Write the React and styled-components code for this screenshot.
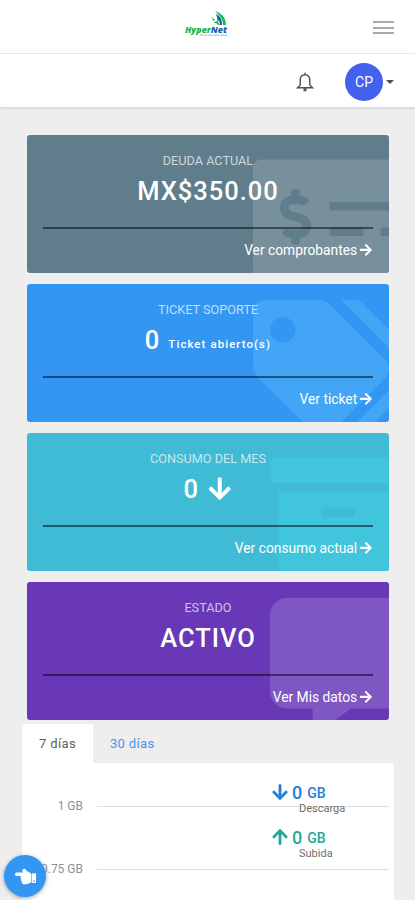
import React, { useState } from 'react'
import styled, { createGlobalStyle } from 'styled-components'
import {
  FaArchive,
  FaArrowDown,
  FaArrowRight,
  FaArrowUp,
  FaCommentAlt,
  FaHandPointLeft,
  FaMoneyCheckAlt,
  FaTags
} from 'react-icons/fa'

const GlobalStyle = createGlobalStyle`
  * {
    box-sizing: border-box;
  }
  body {
    margin: 0;
    background: #eeeeee;
    font-family: Roboto, 'Liberation Sans', sans-serif;
    font-size: 13px;
    color: #5e5e5e;
    overflow: hidden;
  }
`

const Page = styled.div`
  height: 900px;
  overflow: hidden;
`

const TopBar = styled.header`
  display: grid;
  grid-template-columns: 1fr auto 1fr;
  align-items: center;
  height: 54px;
  padding: 0 21px 0 19px;
  background: #fff;
  border-bottom: 1px solid #e9e9e9;
`

const Logo = styled.svg`
  grid-column: 2;
  width: 46px;
  height: 30px;
  margin-bottom: 8px;
`

const MenuButton = styled.button`
  grid-column: 3;
  justify-self: end;
  display: flex;
  flex-direction: column;
  justify-content: space-between;
  width: 21px;
  height: 13px;
  margin-top: 2px;
  padding: 0;
  border: 0;
  background: none;
`

const MenuLine = styled.span`
  height: 2px;
  background: #a9a9a9;
`

const UserBar = styled.nav`
  display: flex;
  justify-content: flex-end;
  align-items: center;
  height: 54px;
  padding: 3px 21px 0 0;
  background: #fff;
  border-bottom: 1px solid #dadada;
  box-shadow: 0 1px 2px rgba(0, 0, 0, 0.08);
`

const Bell = styled.svg`
  width: 18px;
  height: 20px;
  margin-right: 31px;
`

const Avatar = styled.div`
  display: flex;
  align-items: center;
  justify-content: center;
  width: 38px;
  height: 38px;
  border-radius: 50%;
  background: #4361ee;
  color: #fff;
  font-size: 14px;
`

const Caret = styled.span`
  margin-left: 3px;
  border: 4px solid transparent;
  border-top: 4px solid #4f4f4f;
  border-bottom: 0;
`

const Cards = styled.main`
  display: flex;
  flex-direction: column;
  gap: 11px;
  padding: 27px 26px 0 27px;
`

const CardBox = styled.section`
  position: relative;
  overflow: hidden;
  height: 138px;
  padding: 17px 16px 0;
  border-radius: 3px;
  background: ${props => props.$color};
  color: #fff;
`

const CardIcon = styled.div`
  position: absolute;
  top: 16px;
  right: ${props => props.$right}px;
  line-height: 0;
  color: ${props => props.$color};

  svg {
    width: ${props => props.$width}px;
    height: 136px;
  }
`

const CardBody = styled.div`
  position: relative;
`

const CardTitle = styled.div`
  height: 17px;
  line-height: 17px;
  text-align: center;
  font-size: 12.7px;
  color: rgba(255, 255, 255, 0.7);
`

const CardValue = styled.div`
  display: flex;
  align-items: center;
  justify-content: center;
  gap: 8px;
  height: 43px;
  font-size: 25.5px;
  font-weight: 500;
  letter-spacing: 1px;
`

const CardNote = styled.small`
  padding-top: 8px;
  font-size: 11.4px;
  letter-spacing: 1.1px;
`

const CardRule = styled.hr`
  height: 2px;
  margin: 15px 0 0;
  border: 0;
  background: rgba(0, 0, 0, 0.5);
`

const CardLink = styled.div`
  display: flex;
  align-items: center;
  justify-content: flex-end;
  gap: 2px;
  height: 41px;
  font-size: 13.8px;
`

const Usage = styled.section`
  padding: 4px 21px 0 22px;
`

const Tabs = styled.div`
  display: flex;
  height: 39px;
`

const Tab = styled.button`
  padding: 0 17px;
  border: 0;
  border-radius: 3px 3px 0 0;
  background: ${props => (props.$active ? '#fff' : 'none')};
  color: ${props => (props.$active ? '#5e5e5e' : '#4694ee')};
  font: 13px Roboto, sans-serif;
  letter-spacing: 0.35px;
`

const Panel = styled.div`
  position: relative;
  height: 170px;
  padding: 31px 5px 0 0;
  border-radius: 0 3px 0 0;
  background: #fff;
`

const GridRow = styled.div`
  display: grid;
  grid-template-columns: 61px 1fr;
  gap: 14px;
  align-items: center;
  height: 24px;
  margin-bottom: 39px;
  font-size: 12px;
  text-align: right;
  color: #909090;
`

const GridLine = styled.span`
  height: 1px;
  background: #dedede;
`

// the totals float over the chart area
const Legend = styled.div`
  position: absolute;
  top: 17px;
  left: 249px;
`

const Stat = styled.div`
  height: 45px;
  color: ${props => props.$color};
`

const StatValue = styled.div`
  display: flex;
  align-items: center;
  gap: 3px;
  height: 24px;
  font-size: 18px;
  font-weight: 500;
`

const Unit = styled.span`
  padding-top: 2px;
  padding-left: 2px;
  font-size: 14px;
`

const StatLabel = styled.div`
  margin-top: -2px;
  padding-left: 28px;
  font-size: 11px;
  line-height: 13px;
  color: #6e6e6e;
`

const FloatingButton = styled.button`
  position: fixed;
  left: 4px;
  bottom: 3px;
  display: flex;
  align-items: center;
  justify-content: center;
  width: 42px;
  height: 42px;
  padding: 0;
  border: 0;
  border-radius: 50%;
  background: #3396f3;
  box-shadow: 0 1px 4px rgba(0, 0, 0, 0.35);
  color: #fff;
  font-size: 21px;
`

const cards = [
  {
    title: 'DEUDA ACTUAL',
    value: 'MX$350.00',
    link: 'Ver comprobantes',
    color: '#607d8b',
    iconColor: '#78909c',
    icon: <FaMoneyCheckAlt />,
    width: 170,
    right: -34
  },
  {
    title: 'TICKET SOPORTE',
    value: '0',
    note: 'Ticket abierto(s)',
    link: 'Ver ticket',
    color: '#3396f3',
    iconColor: '#42a5f5',
    icon: <FaTags />,
    width: 170,
    right: -34
  },
  {
    title: 'CONSUMO DEL MES',
    value: '0',
    arrow: true,
    link: 'Ver consumo actual',
    color: '#40bbd5',
    iconColor: '#41c5dc',
    icon: <FaArchive />,
    width: 136,
    right: -17
  },
  {
    title: 'ESTADO',
    value: 'ACTIVO',
    link: 'Ver Mis datos',
    color: '#6938b6',
    iconColor: '#7e57c2',
    icon: <FaCommentAlt />,
    width: 136,
    right: -17
  }
]

const Card = ({ card }) => (
  <CardBox $color={card.color}>
    <CardIcon $right={card.right} $width={card.width} $color={card.iconColor}>
      {card.icon}
    </CardIcon>
    <CardBody>
      <CardTitle>{card.title}</CardTitle>
      <CardValue>
        <span>{card.value}</span>
        {card.note && <CardNote>{card.note}</CardNote>}
        {card.arrow && <FaArrowDown />}
      </CardValue>
      <CardRule />
      <CardLink>
        {card.link} <FaArrowRight />
      </CardLink>
    </CardBody>
  </CardBox>
)

const App = () => {
  const [range, setRange] = useState('7')

  return (
    <Page>
      <GlobalStyle />
      <TopBar>
        <Logo viewBox="0 0 46 30">
          <path d="M31 3c6 2 11 6 11 14h-3c0-6-3-9-8-14z" fill="#1db954" />
          <path d="M32 6c4 2 6 5 6 11h-2l-1-5-2 3c1-4 0-6-1-9z" fill="#1760a8" />
          <path d="M28 9l3 3-2 1zM29 15l4-2 3 4h-2l-2-2z" fill="#1db954" />
          <text
            x="1"
            y="24.5"
            fontFamily="Open Sans, sans-serif"
            fontSize="9.5"
            fontWeight="800"
            fontStyle="italic"
            textLength="42"
            lengthAdjust="spacingAndGlyphs"
            fill="#16b64c"
          >
            Hyper<tspan fill="#1a5fae">Net</tspan>
          </text>
          <path d="M16 27.2h27" stroke="#8eaed3" strokeDasharray="2 .5" />
        </Logo>
        <MenuButton>
          <MenuLine />
          <MenuLine />
          <MenuLine />
        </MenuButton>
      </TopBar>
      <UserBar>
        <Bell viewBox="0 0 18 20" fill="none" stroke="#505050" strokeWidth="1.4">
          <path d="M9 .8v1.7M4.2 13V8.5C4.2 5 6 2.7 9 2.7s4.8 2.3 4.8 5.8V13l2.8 2.8H1.4zM8.2 16.5v2h1.6v-2" />
        </Bell>
        <Avatar>CP</Avatar>
        <Caret />
      </UserBar>
      <Cards>
        {cards.map(card => <Card key={card.title} card={card} />)}
      </Cards>
      <Usage>
        <Tabs>
          <Tab $active={range === '7'} onClick={() => setRange('7')}>7 días</Tab>
          <Tab $active={range === '30'} onClick={() => setRange('30')}>30 días</Tab>
        </Tabs>
        <Panel>
          <GridRow>1 GB<GridLine /></GridRow>
          <GridRow>0.75 GB<GridLine /></GridRow>
          <Legend>
            <Stat $color="#2280dc">
              <StatValue><FaArrowDown />0 <Unit>GB</Unit></StatValue>
              <StatLabel>Descarga</StatLabel>
            </Stat>
            <Stat $color="#26a69a">
              <StatValue><FaArrowUp />0 <Unit>GB</Unit></StatValue>
              <StatLabel>Subida</StatLabel>
            </Stat>
          </Legend>
        </Panel>
      </Usage>
      <FloatingButton><FaHandPointLeft /></FloatingButton>
    </Page>
  )
}

export default App
